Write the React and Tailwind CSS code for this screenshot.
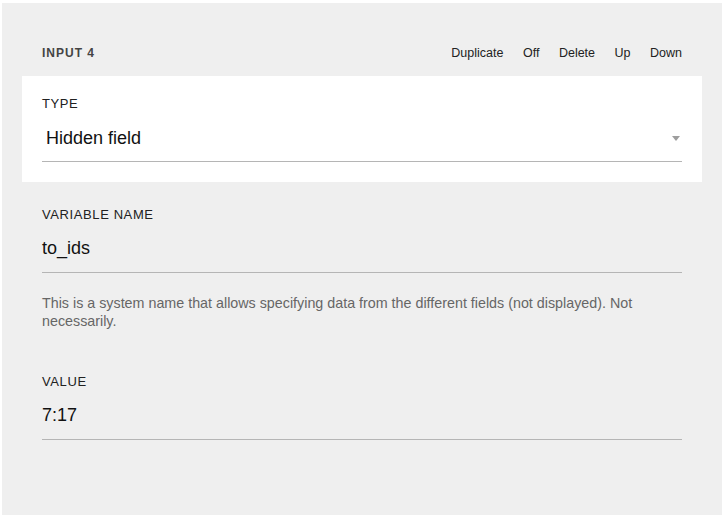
import React from 'react';

const actions = ['Duplicate', 'Off', 'Delete', 'Up', 'Down'];

const TextField = ({ label, value }) => (
  <div>
    <div className="pt-px text-[13px] leading-4 tracking-[0.6px] uppercase text-[#212121]">{label}</div>
    <div className="mt-[5px] h-[45px] flex items-center pb-[4px] border-b border-[#b5b5b5] text-[18px] text-[#111]">
      {value}
    </div>
  </div>
);

const App = () => {
  return (
    <div className="min-h-screen bg-white pt-[3px] pl-[2px] font-['Liberation_Sans',Arial,sans-serif]">
      <div className="w-[720px] h-[512px] bg-[#efefef]">
        {/* header */}
        <div className="flex items-center justify-between px-10 pt-[42px] pb-[15px] leading-4">
          <span className="text-[12px] font-bold tracking-[1px] text-[#444]">INPUT 4</span>
          <div className="flex gap-[19.5px] text-[12.5px] text-[#222]">
            {actions.map((a) => (
              <button key={a} className="cursor-pointer">{a}</button>
            ))}
          </div>
        </div>

        {/* type select */}
        <div className="mx-5 bg-white px-5 pt-[20px] pb-5">
          <div className="text-[13px] leading-4 tracking-[0.6px] uppercase text-[#212121]">Type</div>
          <div className="mt-[10px] h-[40px] flex items-center justify-between pb-[7px] pl-1 pr-[2px] border-b border-[#b5b5b5]">
            <span className="text-[18px] text-[#111]">Hidden field</span>
            <span className="w-0 h-0 border-l-[4px] border-r-[4px] border-t-[5px] border-l-transparent border-r-transparent border-t-[#9e9e9e] mt-px" />
          </div>
        </div>

        <div className="px-10 pt-6">
          <TextField label="Variable name" value="to_ids" />
          <p className="mt-[21px] text-[14.3px] leading-[18px] text-[#666]">
            This is a system name that allows specifying data from the different fields (not displayed). Not necessarily.
          </p>
          <div className="mt-[43px]">
            <TextField label="Value" value="7:17" />
          </div>
        </div>
      </div>
    </div>
  );
};

export default App;
